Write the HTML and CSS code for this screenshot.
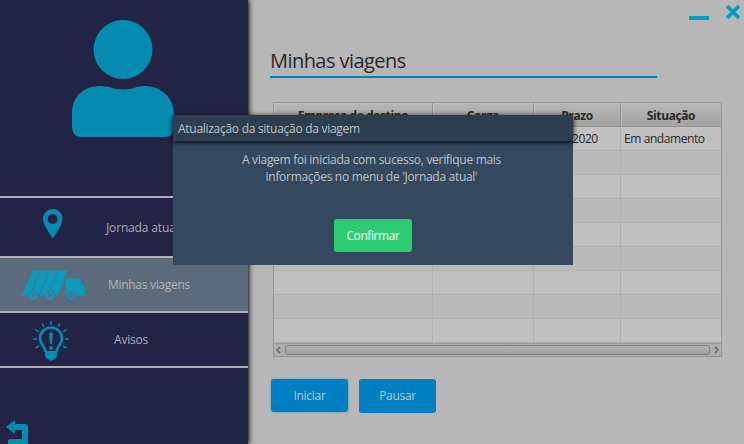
FILE: index.html
```html
<!DOCTYPE html>
<html lang="pt-BR">
<head>
<meta charset="utf-8">
<title>Minhas viagens</title>
<link rel="stylesheet" href="styles.css">
</head>
<body>
<div class="app">
  <aside class="sidebar">
    <div class="profile">
      <svg class="avatar" width="102" height="118" viewBox="0 0 102 118"><circle cx="51" cy="29.5" r="29.5"/><path d="M0 94C0 74 14 66 29 66C38 66 41 69.500 51 69.500S64 66 73 66C88 66 102 77 102 94V107Q102 117 92 117H10Q0 117 0 107Z"/></svg>
    </div>
    <nav class="menu">
      <a class="item item-trip">
        <svg class="pin" width="20" height="30" viewBox="0 0 20 30"><path fill-rule="evenodd" d="M10 0C4 0 0 4.500 0 10C0 15 5 22 9.700 29.500C15 22 19.500 15 19.500 10C19.500 4.500 15.500 0 10 0ZM9.700 5A5 5 0 1 1 9.700 15A5 5 0 1 1 9.700 5Z"/></svg>
        <span class="label">Jornada atual</span>
      </a>
      <a class="item item-trips active">
        <svg class="truck" width="64" height="31" viewBox="0 0 64 31"><path d="M10.500 .5H17.500L7.500 25.500H0ZM18.500 .5H26.500L16.500 25.500H8.500ZM27.500 .5H35.500L25.500 25.500H17.500ZM36.500 .5H46L36 25.500H26.500ZM45 8.500H57Q59 8.500 59 11V14.500Q63 15 63 19V25.500H43V11Q43 8.500 45 8.500Z"/><g class="gaps"><circle cx="11" cy="25.500" r="5.300"/><circle cx="28" cy="25.500" r="5.300"/><circle cx="49.500" cy="25.500" r="5.300"/></g><g class="tires"><circle cx="11" cy="25.500" r="3.200"/><circle cx="28" cy="25.500" r="3.200"/><circle cx="49.500" cy="25.500" r="3.200"/></g></svg>
        <span class="label">Minhas viagens</span>
      </a>
      <a class="item item-alerts">
        <svg class="bulb" width="36" height="41" viewBox="0 0 36 41"><path class="glass" d="M12.500 31C12.500 25 7 24 7 17.500A11 11 0 0 1 29 17.500C29 24 23.500 25 23.500 31"/><path d="M12 30H24V35Q23 38 20.500 38.500Q18 41 15.500 38.500Q13 38 12 35ZM16 12.500Q18 10 20 12.500L19 23H17Z"/><circle cx="18" cy="27" r="2"/><path class="rays" d="M18 0V4M9 2.500L11 6M27 2.500L25 6M2.500 8.500L6 11M33.500 8.500L30 11M0 18H4M32 18H36M2.500 27L6 25M33.500 27L30 25"/></svg>
        <span class="label">Avisos</span>
      </a>
    </nav>
    <svg class="back" width="22" height="24" viewBox="0 0 22 24"><path d="M0 7L9 0V4H19Q22 4 22 7V24H2V21Q2 19 5 19H16V10H9V14Z"/></svg>
  </aside>
  <main class="content">
    <div class="window-controls">
      <span class="minimize"></span>
      <svg class="close" width="16" height="16" viewBox="0 0 16 16"><path d="M2 2L14 14M14 2L2 14"/></svg>
    </div>
    <h1 class="title"><span>Minhas viagens</span></h1>
    <div class="table">
      <div class="row head"><span>Empresa de destino</span><span>Carga</span><span>Prazo</span><span>Situação</span></div>
      <div class="row"><span></span><span></span><span class="date">2020</span><span>Em andamento</span></div>
      <div class="row"><span></span><span></span><span></span><span></span></div>
      <div class="row"><span></span><span></span><span></span><span></span></div>
      <div class="row"><span></span><span></span><span></span><span></span></div>
      <div class="row"><span></span><span></span><span></span><span></span></div>
      <div class="row"><span></span><span></span><span></span><span></span></div>
      <div class="row"><span></span><span></span><span></span><span></span></div>
      <div class="row"><span></span><span></span><span></span><span></span></div>
      <div class="row"><span></span><span></span><span></span><span></span></div>
      <div class="scroll">
        <svg width="5" height="8" viewBox="0 0 5 8"><path d="M4 1L1 4L4 7"/></svg>
        <div class="thumb"></div>
        <svg width="5" height="8" viewBox="0 0 5 8"><path d="M1 1L4 4L1 7"/></svg>
      </div>
    </div>
    <div class="actions"><button class="start">Iniciar</button><button>Pausar</button></div>
  </main>
</div>
<section class="dialog">
  <header class="dialog-title"><span>Atualização da situação da viagem</span></header>
  <p class="message"><span class="line-one">A viagem foi iniciada com sucesso, verifique mais</span><br><span class="line-two">informações no menu de 'Jornada atual'</span></p>
  <button class="confirm">Confirmar</button>
</section>
</body>
</html>
```
FILE: styles.css
```css
* { box-sizing: border-box; }
body { margin: 0; font: 12px/16px "Open Sans", "Noto Sans", sans-serif; overflow: hidden; }
button { font: inherit; border: 0; padding: 0; }
svg { display: block; flex: none; }
.app { display: flex; width: 744px; height: 444px; background: #b7b7b7; }
.sidebar { position: relative; z-index: 1; display: flex; flex-direction: column; width: 248px; height: 444px; background: #232346; box-shadow: 1px 0 5px #000; fill: #068bb0; overflow: visible; }
.profile { height: 196px; padding: 20px 0 0 72px; }
.menu { border-top: 2px solid #b0afb5; }
.item { display: flex; align-items: center; height: 60px; border-bottom: 2px solid #b0afb5; color: #adadb2; }
.item-trips, .item-alerts { height: 55px; }
.active { background: #5b6b7b; fill: #0b9abd; color: #b2b4b6; }
.pin { margin: -6px 0 0 43px; }
.item-trip .label { margin: 2px 0 0 43px; letter-spacing: -.15px; }
.truck { margin: 1px 0 0 22px; }
.item-trips .label { margin-left: 22px; letter-spacing: -.3px; }
.gaps { fill: #5b6b7b; }
.tires { fill: #5b6b7b; stroke: #0b9abd; stroke-width: 2.6; }
.bulb { margin: 3px 0 0 33px; }
.glass { fill: none; stroke: #068bb0; stroke-width: 2.7; }
.rays { fill: none; stroke: #068bb0; stroke-width: 1.5; }
.item-alerts .label { margin: 1px 0 0 45px; letter-spacing: -.2px; }
.back { margin: auto 0 0 6px; }
.content { width: 496px; padding: 4px 0 0 22px; }
.window-controls { display: flex; justify-content: flex-end; gap: 16px; height: 40px; padding-right: 3px; }
.minimize { width: 20px; height: 4px; margin-top: 12px; background: #009dc5; }
.close { fill: none; stroke: #009dc5; stroke-width: 3.6; }
.title { width: 387px; height: 34px; margin: 0 0 24px; border-bottom: 2px solid #0080c0; font-size: 20px; line-height: 34px; font-weight: 400; letter-spacing: -.55px; color: #292929; }
.table { width: 449px; height: 255px; margin-left: 3px; border: 1px solid #979797; color: #292929; }
.row { display: grid; grid-template-columns: 159px 101px 87px 100px; height: 24px; background: #c0c0c0; line-height: 24px; letter-spacing: -.42px; }
.row:nth-child(odd) { background: #bababa; }
.row span { padding-left: 3px; border-right: 1px solid #b0b0b0; border-bottom: 1px solid #b0b0b0; white-space: nowrap; overflow: hidden; }
.row span:last-child { border-right: 0; }
.row .date { padding-left: 38px; }
.table .head { background: linear-gradient(#b6b6b6, #a3a3a3); text-align: center; font-weight: 700; line-height: 25px; letter-spacing: -.4px; }
.table .head span { padding: 0; border-color: #949494; box-shadow: inset 1px 1px #bcbcbc; }
.scroll { display: flex; align-items: center; justify-content: space-between; height: 13px; padding: 0 2px; border-top: 1px solid #999; background: #adadad; }
.scroll svg { fill: none; stroke: #686868; stroke-width: 1.5; }
.thumb { width: 425px; height: 10px; border: 1px solid #838383; border-radius: 3px; background: linear-gradient(#b4b4b4, #a1a1a1); }
.actions { display: flex; align-items: flex-start; gap: 11px; margin: 22px 0 0 1px; }
.actions button { width: 77px; height: 34px; border-radius: 3px; background: #0080c3; color: #bac4cc; letter-spacing: -.3px; }
.actions .start { height: 33px; box-shadow: 0 0 1px 1px #8cacb9; }
.dialog { position: absolute; z-index: 2; left: 173px; top: 115px; width: 400px; height: 150px; background: #34495e; color: #bdc1c5; text-align: center; }
.dialog-title { height: 26px; padding: 0 5px; background: #2d3e50; box-shadow: 0 1px 5px #000; text-align: left; line-height: 28px; letter-spacing: -.28px; }
.message { margin: 10px 0 0; padding-right: 3px; line-height: 17px; letter-spacing: -.3px; }
.confirm { width: 78px; height: 33px; margin-top: 34px; border-radius: 3px; background: #2ecc71; color: #fff; letter-spacing: -.42px; }
```
